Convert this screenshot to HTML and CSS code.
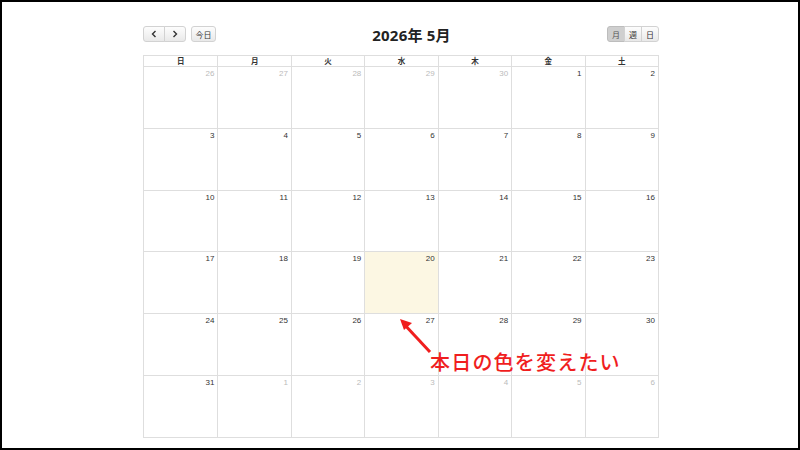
FILE: index.html
```html
<!DOCTYPE html>
<html lang="ja">
<head>
<meta charset="utf-8">
<link rel="stylesheet" href="styles.css">
</head>
<body>
<div class="frame">
  <div class="cal">
    <div class="toolbar">
      <div class="left">
        <div class="group">
          <span class="btn nav"><svg width="8" height="8" viewBox="0 0 8 8"><path d="M5.5 1 L2.5 4 L5.5 7" fill="none" stroke="#333" stroke-width="1.4"/></svg></span>
          <span class="btn nav"><svg width="8" height="8" viewBox="0 0 8 8"><path d="M2.5 1 L5.5 4 L2.5 7" fill="none" stroke="#333" stroke-width="1.4"/></svg></span>
        </div>
        <span class="btn today">今日</span>
      </div>
      <div class="title">2026年 5月</div>
      <div class="right">
        <div class="group">
          <span class="btn view active">月</span>
          <span class="btn view">週</span>
          <span class="btn view">日</span>
        </div>
      </div>
    </div>
    <div class="grid">
      <div class="head">
        <div>日</div><div>月</div><div>火</div><div>水</div><div>木</div><div>金</div><div>土</div>
      </div>
      <div class="body">
        <div class="row"><div class="other">26</div><div class="other">27</div><div class="other">28</div><div class="other">29</div><div class="other">30</div><div>1</div><div>2</div></div>
        <div class="row"><div>3</div><div>4</div><div>5</div><div>6</div><div>7</div><div>8</div><div>9</div></div>
        <div class="row"><div>10</div><div>11</div><div>12</div><div>13</div><div>14</div><div>15</div><div>16</div></div>
        <div class="row"><div>17</div><div>18</div><div>19</div><div class="today-cell">20</div><div>21</div><div>22</div><div>23</div></div>
        <div class="row"><div>24</div><div>25</div><div>26</div><div>27</div><div>28</div><div>29</div><div>30</div></div>
        <div class="row"><div>31</div><div class="other">1</div><div class="other">2</div><div class="other">3</div><div class="other">4</div><div class="other">5</div><div class="other">6</div></div>
      </div>
    </div>
  </div>
  <svg class="arrow" width="40" height="40" viewBox="0 0 40 40">
    <path d="M31 34 L4 5" stroke="#f01e1e" stroke-width="3" fill="none"/>
    <path d="M1 1 L13 5 L5 12 Z" fill="#f01e1e"/>
  </svg>
  <div class="note">本日の色を変えたい</div>
</div>
</body>
</html>
```

FILE: styles.css
```css
* { box-sizing: border-box; }
html, body { margin: 0; padding: 0; background: #fff; }
.frame {
  position: relative;
  width: 800px;
  height: 450px;
  border: 2px solid #000;
  font-family: "Liberation Sans", "Noto Sans CJK JP", sans-serif;
  color: #333;
  overflow: hidden;
}
.cal {
  width: 516px;
  margin-left: 141px;
  padding-top: 24px;
}
.toolbar {
  display: flex;
  align-items: center;
  height: 16px;
  margin-bottom: 13px;
}
.left { display: flex; gap: 5px; }
.right { display: flex; justify-content: flex-end; }
.group { display: flex; }
.btn {
  display: flex;
  align-items: center;
  justify-content: center;
  height: 16px;
  border: 1px solid #d2d2d2;
  background: linear-gradient(#fdfdfd, #e9e9e9);
  font-size: 8px;
  color: #333;
  font-family: "Noto Sans CJK JP", sans-serif;
}
.group .btn + .btn { margin-left: -1px; }
.group .btn:first-child { border-radius: 3px 0 0 3px; }
.group .btn:last-child { border-radius: 0 3px 3px 0; }
.nav { width: 22px; }
.today { width: 25px; border-radius: 3px; }
.view { width: 18px; }
.view.active { background: #cfcfcf; border-color: #bdbdbd; color: #555; }
.title {
  flex: 1;
  text-align: center;
  font-family: "Open Sans", "Noto Sans CJK JP", sans-serif;
  font-weight: 700;
  font-size: 15px;
  color: #222;
  letter-spacing: 0.2px;
}
.grid {
  border: 1px solid #dedede;
}
.head {
  display: grid;
  grid-template-columns: repeat(7, 1fr);
  height: 11px;
  border-bottom: 1px solid #dedede;
}
.head div {
  font-family: "Noto Sans CJK JP", sans-serif;
  font-weight: 700;
  font-size: 7.5px;
  line-height: 10px;
  text-align: center;
  border-left: 1px solid #dedede;
  color: #333;
}
.head div:first-child { border-left: none; }
.body {
  display: flex;
  flex-direction: column;
  height: 370px;
}
.row {
  flex: 1;
  display: grid;
  grid-template-columns: repeat(7, 1fr);
  border-top: 1px solid #dedede;
}
.row:first-child { border-top: none; }
.row div {
  border-left: 1px solid #dedede;
  text-align: right;
  font-size: 8px;
  padding: 2px 3px 0 0;
  color: #333;
}
.row div:first-child { border-left: none; }
.row div.other { color: #bbb; }
.row div.today-cell { background: #fcf7e3; }
.arrow {
  position: absolute;
  left: 397px;
  top: 316px;
}
.note {
  position: absolute;
  left: 428px;
  top: 348px;
  font-family: "Noto Sans CJK JP", sans-serif;
  font-size: 20px;
  font-weight: 500;
  color: #f01e1e;
  letter-spacing: 1.2px;
  line-height: 24px;
}
```
